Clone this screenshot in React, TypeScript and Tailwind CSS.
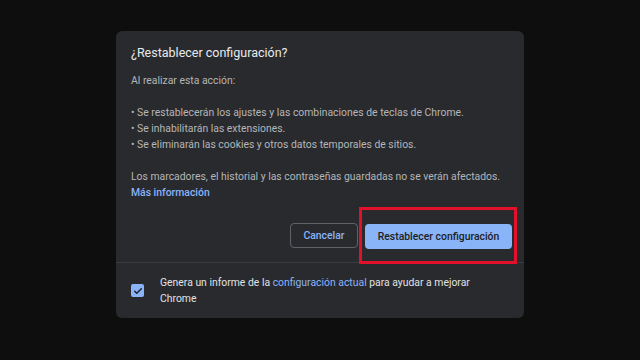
export default function App() {
  return (
    <div className="w-[640px] h-[360px] bg-[#0e0e0f] pt-[31px] pl-[116px]" style={{ fontFamily: "Roboto, 'Liberation Sans', sans-serif" }}>
      <div className="w-[408px] h-[287px] bg-[#292a2d] rounded-[6px] flex flex-col">
        <div className="px-[15px] pt-[12px]">
          <div className="text-[12.5px] leading-[20px] text-[#e8eaed]">¿Restablecer configuración?</div>
          <div className="mt-[10px] text-[10.4px] leading-[16px] text-[#b4b6b9]">
            <div>Al realizar esta acción:</div>
            <div className="h-[16px]" />
            <div>• Se restablecerán los ajustes y las combinaciones de teclas de Chrome.</div>
            <div>• Se inhabilitarán las extensiones.</div>
            <div>• Se eliminarán las cookies y otros datos temporales de sitios.</div>
            <div className="h-[16px]" />
            <div>Los marcadores, el historial y las contraseñas guardadas no se verán afectados.</div>
            <div className="text-[#8ab4f8] font-medium">Más información</div>
          </div>
          <div className="flex justify-end gap-[7px] mt-[22px] mr-[-3px]">
            <button className="h-[25px] w-[68px] rounded-[4px] border border-[#5f6368] text-[#8ab4f8] text-[10.4px] font-medium">Cancelar</button>
            <div className="relative">
              <button className="h-[25px] w-[147px] rounded-[4px] bg-[#8ab4f8] text-[#202124] text-[10.4px] font-medium">Restablecer configuración</button>
              <div className="absolute left-[-6px] top-[-16px] w-[158px] h-[57px] border-[3px] border-[#e3102c]" />
            </div>
          </div>
        </div>
        <div className="mt-[13px] border-t border-[#3a3b3e] flex-1 flex items-center px-[15px]">
          <div className="w-[13px] h-[13px] rounded-[2px] bg-[#8ab4f8] flex items-center justify-center shrink-0">
            <svg width="10" height="10" viewBox="0 0 24 24" fill="none" stroke="#202124" strokeWidth="3.5" strokeLinecap="round" strokeLinejoin="round"><path d="M4 12.5l5 5L20 6.5" /></svg>
          </div>
          <div className="ml-[16px] text-[10.4px] leading-[16px] text-[#e0e2e5] w-[330px]">
            Genera un informe de la <span className="text-[#8ab4f8]">configuración actual</span> para ayudar a mejorar Chrome
          </div>
        </div>
      </div>
    </div>
  );
}
